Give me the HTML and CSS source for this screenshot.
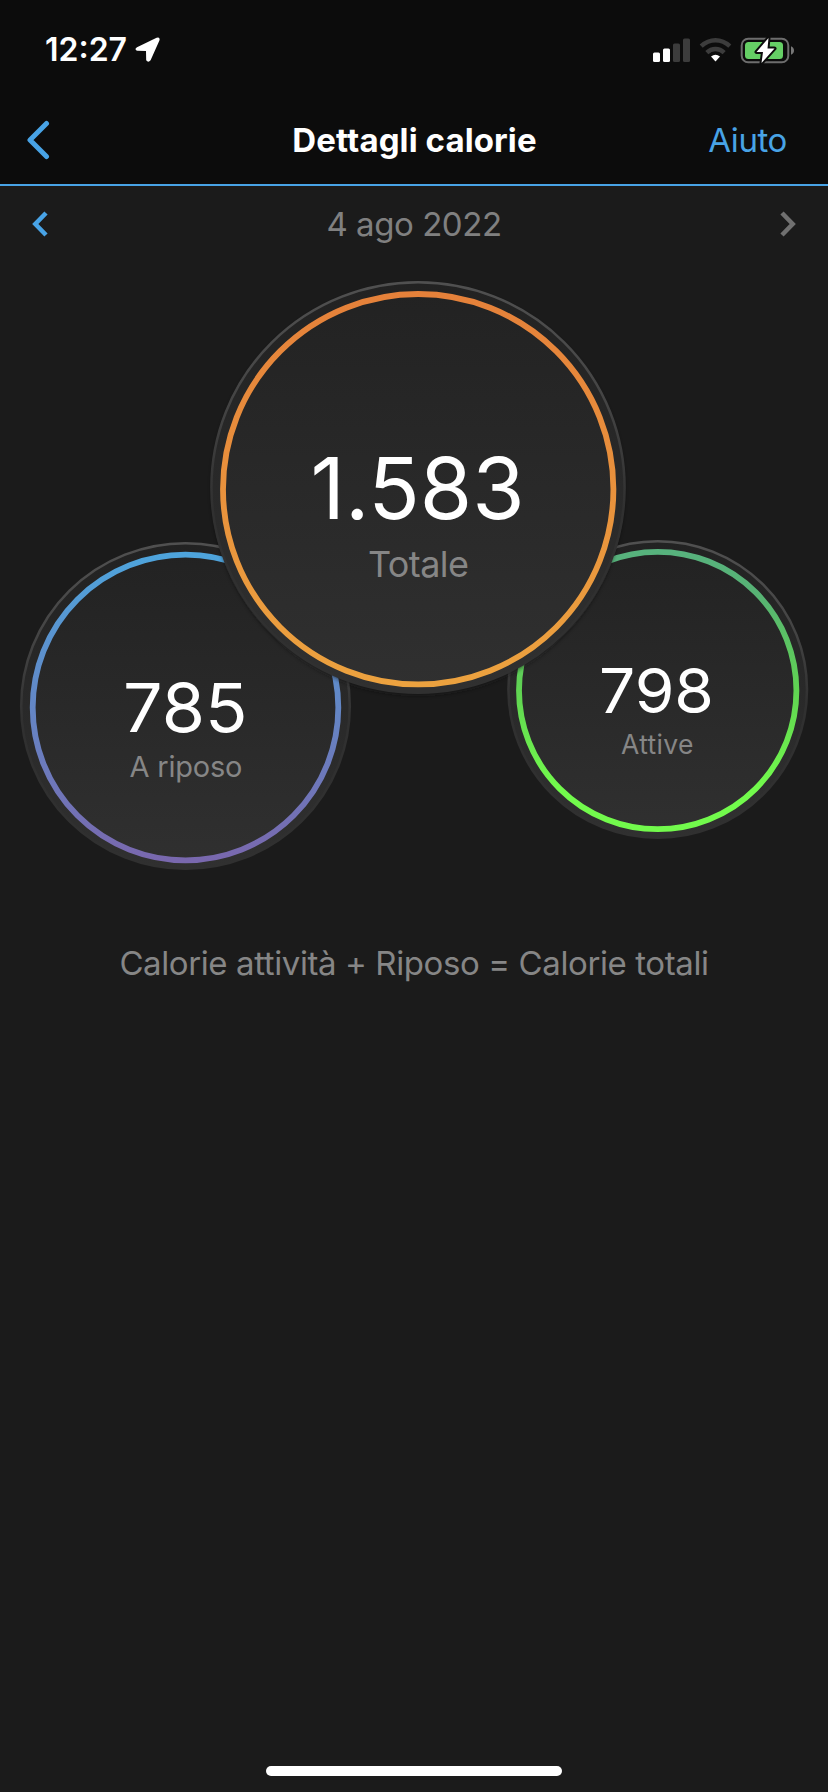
FILE: index.html
```html
<!DOCTYPE html>
<html lang="it">
<head>
<meta charset="utf-8">
<title>Dettagli calorie</title>
<link rel="stylesheet" href="styles.css">
</head>
<body>
<div class="screen">
  <header class="top">
    <div class="status">
      <div class="status-left">
        <span class="time">12:27</span>
        <svg class="location" width="26" height="26" viewBox="0 0 26 26"><path d="M2 10.200 21.600 .8Q25.400 -.4 24.400 3.600L15.600 23.300Q13.200 26.200 11.200 23.300L11 14 2 13.800Q-1 12.200 2 10.200Z" fill="#fff"/></svg>
      </div>
      <svg class="indicators" width="144" height="28" viewBox="0 0 144 28">
        <rect x="1" y="15.500" width="7" height="9.500" rx="1.500" fill="#fff"/>
        <rect x="11" y="11.500" width="7" height="13.500" rx="1.500" fill="#fff"/>
        <rect x="21" y="6.500" width="7" height="18.500" rx="1.500" fill="#3c3c3c"/>
        <rect x="31" y="1.500" width="7" height="23.500" rx="1.500" fill="#3c3c3c"/>
        <g fill="none" stroke="#3c3c3c" stroke-width="4.400">
          <path d="M49.200 9.200Q55.500 3.200 63.500 3.200T77.800 9.200"/>
          <path d="M54.800 15.600Q58.500 12 63.500 12T72.200 15.600"/>
        </g>
        <path d="M59 19.500Q63.500 15.800 68 19.500L63.500 24.500Z" fill="#fff"/>
        <rect x="89.700" y="1.700" width="46.600" height="23.600" rx="6.500" fill="none" stroke="#6d6d6d" stroke-width="2"/>
        <rect x="93" y="5" width="38" height="17" rx="3.500" fill="#65cf65"/>
        <path d="M139 9.200Q142 10.500 142 13.500T139 17.800Z" fill="#777"/>
        <path d="M116.500 1 104.500 15H111L109.500 26 122.500 11.500H115.500Z" fill="#fff" stroke="#0c0c0c" stroke-width="4" stroke-linejoin="round" paint-order="stroke"/>
      </svg>
    </div>
    <nav class="nav">
      <svg class="back" width="24" height="40" viewBox="0 0 24 40"><path d="M20.500 3.500 4 20 20.500 36.500" fill="none" stroke="#48a3e6" stroke-width="5" stroke-linecap="round" stroke-linejoin="round"/></svg>
      <h1 class="title">Dettagli calorie</h1>
      <a class="help">Aiuto</a>
    </nav>
  </header>
  <div class="datebar">
    <svg width="16" height="26" viewBox="0 0 16 26"><path d="M14 2 3.300 13 14 24" fill="none" stroke="#48a3e6" stroke-width="4.500"/></svg>
    <span class="date">4 ago 2022</span>
    <svg width="16" height="26" viewBox="0 0 16 26"><path d="M2 2 12.700 13 2 24" fill="none" stroke="#707070" stroke-width="4.500"/></svg>
  </div>
  <svg class="chart" width="828" height="640" viewBox="0 260 828 640">
    <defs>
      <linearGradient id="disc" x1="0" y1="0" x2="0" y2="1"><stop offset="0" stop-color="#222"/><stop offset="1" stop-color="#303030"/></linearGradient>
      <linearGradient id="rim" x1="0" y1="0" x2="0" y2="1"><stop offset="0" stop-color="#505050"/><stop offset=".3" stop-color="#444"/><stop offset=".55" stop-color="#303030"/><stop offset="1" stop-color="#303030"/></linearGradient>
      <linearGradient id="orange" x1="0" y1="0" x2="0" y2="1"><stop offset="0" stop-color="#e5813a"/><stop offset="1" stop-color="#eca23f"/></linearGradient>
      <linearGradient id="blue" x1="0" y1="0" x2="0" y2="1"><stop offset="0" stop-color="#4ea4dc"/><stop offset="1" stop-color="#7968ae"/></linearGradient>
      <linearGradient id="green" x1="0" y1="0" x2="0" y2="1"><stop offset="0" stop-color="#57b27d"/><stop offset=".15" stop-color="#57b274"/><stop offset=".5" stop-color="#60d452"/><stop offset=".85" stop-color="#72fa4c"/><stop offset="1" stop-color="#72fa4c"/></linearGradient>
      <filter id="shadow" x="-10%" y="-10%" width="120%" height="120%"><feGaussianBlur stdDeviation="2"/></filter>
    </defs>
    <ellipse cx="185.500" cy="706" rx="164.300" ry="162.800" fill="url(#disc)" stroke="url(#rim)" stroke-width="2.500"/>
    <circle cx="185.500" cy="707.500" r="152.800" fill="none" stroke="url(#blue)" stroke-width="5.800"/>
    <ellipse cx="657.700" cy="689.500" rx="149.300" ry="148.300" fill="url(#disc)" stroke="url(#rim)" stroke-width="2.500"/>
    <circle cx="657.700" cy="690.500" r="138.700" fill="none" stroke="url(#green)" stroke-width="5.800"/>
    <ellipse cx="418" cy="490" rx="206" ry="205" fill="#161616" opacity=".7" filter="url(#shadow)"/>
    <ellipse cx="418" cy="487.500" rx="206.600" ry="205.300" fill="url(#disc)" stroke="url(#rim)" stroke-width="2.500"/>
    <circle cx="418.200" cy="489.200" r="195.200" fill="none" stroke="url(#orange)" stroke-width="5.800"/>
    <g class="values">
      <text x="310.500" y="519" font-size="85" textLength="214" lengthAdjust="spacingAndGlyphs">1.583</text>
      <text x="123" y="732" font-size="67.500" textLength="124.500" lengthAdjust="spacingAndGlyphs">785</text>
      <text x="599" y="713" font-size="62" textLength="115" lengthAdjust="spacingAndGlyphs">798</text>
    </g>
    <g class="labels">
      <text x="368" y="576.500" font-size="36" textLength="101">Totale</text>
      <text x="129.500" y="777" font-size="29" textLength="113">A riposo</text>
      <text x="621" y="753.500" font-size="26.500" textLength="72.500">Attive</text>
    </g>
  </svg>
  <p class="formula">Calorie attività + Riposo = Calorie totali</p>
  <div class="home"></div>
</div>
</body>
</html>
```
FILE: styles.css
```css
* { box-sizing: border-box; }
body { margin: 0; background: #1b1b1b; font-family: Inter, "Liberation Sans", sans-serif; }
.screen { width: 828px; height: 1792px; display: flex; flex-direction: column; overflow: hidden; }
.top { height: 186px; background: #0c0c0c; border-bottom: 2px solid #48a3e6; flex: none; }
.status { height: 96px; padding: 28px 32px 0 45px; display: flex; justify-content: space-between; }
.status-left { display: flex; gap: 9px; }
.time { color: #fff; font-size: 32px; line-height: 43px; font-weight: 600; letter-spacing: 0; width: 81px; white-space: nowrap; }
.location { margin-top: 9px; }
.indicators { margin-top: 8.500px; }
.nav { height: 88px; display: grid; grid-template-columns: 160px 1fr 160px; align-items: center; padding: 0 41px 0 26px; }
.title { margin: 0; color: #fff; font-size: 33px; line-height: 40px; font-weight: 700; text-align: center; letter-spacing: .1px; padding-left: 16px; white-space: nowrap; }
.help { color: #48a3e6; font-size: 33px; line-height: 40px; text-align: right; letter-spacing: -.4px; }
.datebar { height: 74px; padding: 2px 32px 0; display: flex; justify-content: space-between; align-items: center; flex: none; }
.date { color: #808080; font-size: 33px; line-height: 40px; letter-spacing: -.45px; }
.chart { display: block; flex: none; }
.values { fill: #fff; }
.labels { fill: #868686; }
.formula { margin: 43px 0 0; color: #868686; font-size: 33px; line-height: 40px; text-align: center; letter-spacing: -.4px; white-space: nowrap; }
.home { width: 296px; height: 10px; border-radius: 5px; background: #fff; margin: auto auto 16px; }
```
